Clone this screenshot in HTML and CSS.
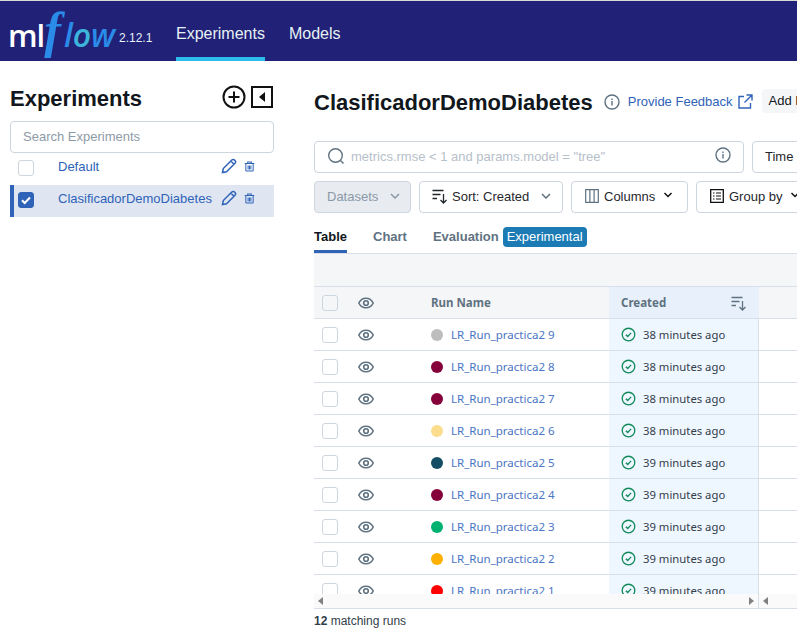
FILE: index.html
```html
<!DOCTYPE html>
<html lang="en">
<head>
    <meta charset="UTF-8">
    <meta name="viewport" content="width=device-width, initial-scale=1.0">
    <title>MLflow Experiments</title>
    <link rel="stylesheet" href="styles.css">
</head>
<body>
    <svg class="icon-defs" width="0" height="0">
        <symbol id="i-eye" viewBox="0 0 16 16"><path d="M.8 8C2.400 4.800 5 3.200 8 3.200s5.600 1.600 7.200 4.800C13.600 11.200 11 12.800 8 12.800S2.400 11.200.8 8z" fill="none" stroke="currentColor" stroke-width="1.600"/><circle cx="8" cy="8" r="2.300" fill="none" stroke="currentColor" stroke-width="1.600"/></symbol>
        <symbol id="i-ok" viewBox="0 0 16 16"><circle cx="8" cy="8" r="6.700" fill="none" stroke="currentColor" stroke-width="1.400"/><path d="M5.200 8.200l2 2 3.600-3.900" fill="none" stroke="currentColor" stroke-width="1.400"/></symbol>
        <symbol id="i-pencil" viewBox="0 0 16 16"><path d="M1.500 14.500l.8-4L10.800 2c.8-.8 2-.8 2.700 0l.5.500c.7.700.7 1.900 0 2.700l-8.500 8.500zM9.800 3l3.200 3.200" fill="none" stroke="currentColor" stroke-width="1.500"/></symbol>
        <symbol id="i-trash" viewBox="0 0 12 12"><path d="M.8 2.700h10.400M4 2.500V1h4v1.500M2 3v7.300c0 .4.300.7.700.7h6.600c.4 0 .7-.3.700-.7V3M4.500 4.800v4.400M6 4.800v4.400M7.500 4.800v4.400" fill="none" stroke="currentColor" stroke-width="1.100"/></symbol>
        <symbol id="i-info" viewBox="0 0 16 16"><circle cx="8" cy="8" r="7" fill="none" stroke="currentColor" stroke-width="1.400"/><path d="M7.300 7h1.400v4.500H7.300zM7.300 4.400h1.400v1.500H7.300z" fill="currentColor"/></symbol>
        <symbol id="i-sort" viewBox="0 0 16 16"><path d="M.5 2.500h11M.5 6.500h8M.5 10.500h4.500M11.500 6v9M8.500 12l3 3 3-3" fill="none" stroke="currentColor" stroke-width="1.300"/></symbol>
    </svg>

    <header class="topbar">
        <div class="logo"><span class="logo-ml">ml</span><span class="logo-f">f</span><span class="logo-low">l<span class="logo-o">o</span>w</span></div>
        <span class="version">2.12.1</span>
        <nav class="topnav">
            <a class="topnav-item active">Experiments</a>
            <a class="topnav-item">Models</a>
        </nav>
    </header>

    <div class="page">
        <aside class="sidebar">
            <div class="sidebar-head">
                <h2>Experiments</h2>
                <svg class="add-icon" width="24" height="24" viewBox="0 0 24 24"><circle cx="12" cy="12" r="10.500" fill="none" stroke="#111" stroke-width="2"/><path d="M12 6.500v11M6.500 12h11" stroke="#111" stroke-width="2"/></svg>
                <svg class="collapse-icon" width="22" height="22" viewBox="0 0 22 22"><rect x="1" y="1" width="20" height="20" fill="none" stroke="#111" stroke-width="2"/><path d="M14 6v10l-6-5z" fill="#111"/></svg>
            </div>
            <div class="sidebar-search">Search Experiments</div>
            <div class="exp-row">
                <span class="check"></span>
                <span class="exp-name">Default</span>
                <svg class="pencil" width="16" height="16"><use href="#i-pencil"/></svg>
                <svg class="trash" width="11" height="11"><use href="#i-trash"/></svg>
            </div>
            <div class="exp-row selected">
                <span class="check checked"><svg width="12" height="12" viewBox="0 0 12 12"><path d="M2 6.300l2.700 2.700L10 3.500" fill="none" stroke="#fff" stroke-width="2"/></svg></span>
                <span class="exp-name">ClasificadorDemoDiabetes</span>
                <svg class="pencil" width="16" height="16"><use href="#i-pencil"/></svg>
                <svg class="trash" width="11" height="11"><use href="#i-trash"/></svg>
            </div>
        </aside>

        <main class="main">
            <div class="title-row">
                <h1>ClasificadorDemoDiabetes</h1>
                <svg class="title-info" width="16" height="16"><use href="#i-info"/></svg>
                <a class="feedback">Provide Feedback</a>
                <svg class="external" width="15" height="15" viewBox="0 0 15 15"><path d="M6 2.500H1v11.500h11.500V9M8.500 1H14v5.500M14 1L6.500 8.500" fill="none" stroke="#2f63b8" stroke-width="1.400"/></svg>
                <span class="add-btn">Add Description</span>
            </div>

            <div class="filter-row">
                <div class="run-search">
                    <svg width="18" height="18" viewBox="0 0 18 18"><circle cx="8.500" cy="8.500" r="6.800" fill="none" stroke="#5f7281" stroke-width="1.400"/><path d="M13.500 13.500l3 3" stroke="#5f7281" stroke-width="1.400"/></svg>
                    <span class="run-search-text">metrics.rmse &lt; 1 and params.model = "tree"</span>
                    <svg class="run-search-info" width="16" height="16"><use href="#i-info"/></svg>
                </div>
                <span class="btn time-btn">Time created</span>
            </div>

            <div class="filter-row second">
                <span class="btn datasets">Datasets
                    <svg width="10" height="6" viewBox="0 0 10 6"><path d="M1 1l4 4 4-4" fill="none" stroke="#8a99a8" stroke-width="1.500"/></svg>
                </span>
                <span class="btn sort-btn">
                    <svg width="16" height="16"><use href="#i-sort"/></svg>
                    Sort: Created
                    <svg class="caret-gap" width="10" height="6" viewBox="0 0 10 6"><path d="M1 1l4 4 4-4" fill="none" stroke="#5f7281" stroke-width="1.500"/></svg>
                </span>
                <span class="btn columns-btn">
                    <svg width="14" height="14" viewBox="0 0 14 14"><path d="M.7.700h12.600v12.600H.7zM4.900.7v12.600M9.100.7v12.600" fill="none" stroke="#5f7281" stroke-width="1.200"/></svg>
                    Columns
                    <svg class="caret-small" width="10" height="6" viewBox="0 0 10 6"><path d="M1.500 1l3.500 3.500L8.500 1" fill="none" stroke="#111" stroke-width="1.500"/></svg>
                </span>
                <span class="btn group-btn">
                    <svg width="14" height="14" viewBox="0 0 14 14"><path d="M.7.700h12.600v12.600H.7z" fill="none" stroke="#111" stroke-width="1.300"/><path d="M3 4h1.500M6 4h5M3 7h1.500M6 7h5M3 10h1.500M6 10h5" stroke="#111" stroke-width="1.200"/></svg>
                    Group by
                    <svg class="caret-small" width="10" height="6" viewBox="0 0 10 6"><path d="M1.500 1l3.500 3.500L8.500 1" fill="none" stroke="#111" stroke-width="1.500"/></svg>
                </span>
            </div>

            <div class="tabs">
                <span class="tab active">Table</span>
                <span class="tab">Chart</span>
                <span class="tab">Evaluation</span>
                <span class="badge">Experimental</span>
            </div>

            <div class="table-top"></div>

            <div class="runs-table">
                <div class="run-row head">
                    <span class="cell-check"><span class="check head-check"></span></span>
                    <span class="cell-eye"><svg width="16" height="16"><use href="#i-eye"/></svg></span>
                    <span class="cell-name">Run Name</span>
                    <span class="cell-created">Created
                        <svg class="created-sort" width="16" height="16"><use href="#i-sort"/></svg>
                    </span>
                </div>
                <div class="run-rows">
                    <div class="run-row">
                        <span class="cell-check"><span class="check"></span></span>
                        <span class="cell-eye"><svg width="16" height="16"><use href="#i-eye"/></svg></span>
                        <span class="cell-name"><i class="dot dot-grey"></i><a>LR_Run_practica2 9</a></span>
                        <span class="cell-created"><svg class="ok" width="15" height="15"><use href="#i-ok"/></svg>38 minutes ago</span>
                    </div>
                    <div class="run-row">
                        <span class="cell-check"><span class="check"></span></span>
                        <span class="cell-eye"><svg width="16" height="16"><use href="#i-eye"/></svg></span>
                        <span class="cell-name"><i class="dot dot-wine"></i><a>LR_Run_practica2 8</a></span>
                        <span class="cell-created"><svg class="ok" width="15" height="15"><use href="#i-ok"/></svg>38 minutes ago</span>
                    </div>
                    <div class="run-row">
                        <span class="cell-check"><span class="check"></span></span>
                        <span class="cell-eye"><svg width="16" height="16"><use href="#i-eye"/></svg></span>
                        <span class="cell-name"><i class="dot dot-wine"></i><a>LR_Run_practica2 7</a></span>
                        <span class="cell-created"><svg class="ok" width="15" height="15"><use href="#i-ok"/></svg>38 minutes ago</span>
                    </div>
                    <div class="run-row">
                        <span class="cell-check"><span class="check"></span></span>
                        <span class="cell-eye"><svg width="16" height="16"><use href="#i-eye"/></svg></span>
                        <span class="cell-name"><i class="dot dot-sand"></i><a>LR_Run_practica2 6</a></span>
                        <span class="cell-created"><svg class="ok" width="15" height="15"><use href="#i-ok"/></svg>38 minutes ago</span>
                    </div>
                    <div class="run-row">
                        <span class="cell-check"><span class="check"></span></span>
                        <span class="cell-eye"><svg width="16" height="16"><use href="#i-eye"/></svg></span>
                        <span class="cell-name"><i class="dot dot-teal"></i><a>LR_Run_practica2 5</a></span>
                        <span class="cell-created"><svg class="ok" width="15" height="15"><use href="#i-ok"/></svg>39 minutes ago</span>
                    </div>
                    <div class="run-row">
                        <span class="cell-check"><span class="check"></span></span>
                        <span class="cell-eye"><svg width="16" height="16"><use href="#i-eye"/></svg></span>
                        <span class="cell-name"><i class="dot dot-wine"></i><a>LR_Run_practica2 4</a></span>
                        <span class="cell-created"><svg class="ok" width="15" height="15"><use href="#i-ok"/></svg>39 minutes ago</span>
                    </div>
                    <div class="run-row">
                        <span class="cell-check"><span class="check"></span></span>
                        <span class="cell-eye"><svg width="16" height="16"><use href="#i-eye"/></svg></span>
                        <span class="cell-name"><i class="dot dot-green"></i><a>LR_Run_practica2 3</a></span>
                        <span class="cell-created"><svg class="ok" width="15" height="15"><use href="#i-ok"/></svg>39 minutes ago</span>
                    </div>
                    <div class="run-row">
                        <span class="cell-check"><span class="check"></span></span>
                        <span class="cell-eye"><svg width="16" height="16"><use href="#i-eye"/></svg></span>
                        <span class="cell-name"><i class="dot dot-amber"></i><a>LR_Run_practica2 2</a></span>
                        <span class="cell-created"><svg class="ok" width="15" height="15"><use href="#i-ok"/></svg>39 minutes ago</span>
                    </div>
                    <div class="run-row">
                        <span class="cell-check"><span class="check"></span></span>
                        <span class="cell-eye"><svg width="16" height="16"><use href="#i-eye"/></svg></span>
                        <span class="cell-name"><i class="dot dot-red"></i><a>LR_Run_practica2 1</a></span>
                        <span class="cell-created"><svg class="ok" width="15" height="15"><use href="#i-ok"/></svg>39 minutes ago</span>
                    </div>
                </div>
                <div class="scrollbar">
                    <div class="scroll-left">
                        <i class="arrow-left"></i>
                        <i class="arrow-right"></i>
                    </div>
                    <div class="scroll-right">
                        <i class="arrow-left"></i>
                    </div>
                </div>
            </div>

            <p class="matching"><b>12</b> matching runs</p>
        </main>
    </div>
</body>
</html>
```

FILE: styles.css
```css
/* Global Styles */
html, body {
    height: 100%;
}

body {
    margin: 0;
    overflow: hidden;
    background: #fff;
    color: #1f272d;
    font-family: "Liberation Sans", Arial, sans-serif;
    font-size: 13px;
    border-top: 1px solid #d8d8d4;
}

.icon-defs {
    position: absolute;
}

svg {
    flex: none;
    display: block;
}

/* Top bar */
.topbar {
    height: 60px;
    background: #212177;
    display: flex;
    align-items: center;
    padding-left: 8px;
    color: #e6f1f5;
}

.logo {
    display: flex;
    align-items: baseline;
    font-family: "Open Sans", sans-serif;
    line-height: 60px;
    width: 111px;
    white-space: nowrap;
    margin-top: 2px;
}

.logo-ml {
    color: #fff;
    font-weight: 600;
    font-size: 31px;
    letter-spacing: -1px;
}

.logo-f {
    color: #2b8be8;
    font-family: "Liberation Serif", serif;
    font-style: italic;
    font-weight: 700;
    font-size: 50px;
}

.logo-low {
    color: #2b8be8;
    font-style: italic;
    font-weight: 600;
    font-size: 32px;
    margin-left: 3px;
}

.logo-o {
    color: #3cb4dc;
}

.version {
    font-size: 12px;
    margin-top: 14px;
    width: 57px;
}

.topnav {
    display: flex;
    gap: 24px;
    height: 100%;
}

.topnav-item {
    font-size: 16px;
    line-height: 66px;
    height: 56px;
}

.topnav-item.active {
    border-bottom: 4px solid #2dbdec;
}

/* Layout */
.page {
    display: flex;
    padding-left: 10px;
}

.sidebar {
    width: 264px;
    flex: none;
}

.sidebar-head {
    height: 60px;
    display: flex;
    align-items: center;
    padding-top: 16px;
    box-sizing: border-box;
}

.sidebar-head h2 {
    margin: 0;
    font-size: 22px;
    flex: 1;
    color: #11171c;
}

.add-icon {
    margin-right: 5px;
    margin-top: -5px;
}

.collapse-icon {
    margin-right: 1px;
    margin-top: -5px;
}

.sidebar-search {
    height: 32px;
    box-sizing: border-box;
    border: 1px solid #cdd5de;
    border-radius: 4px;
    padding: 0 12px;
    line-height: 30px;
    color: #8d9aa6;
    background: #fff;
}

.exp-row {
    height: 32px;
    box-sizing: border-box;
    display: flex;
    align-items: center;
    padding-left: 8px;
    padding-bottom: 2px;
    color: #2f63b8;
}

.exp-row.selected {
    background: #dfe6f2;
    border-left: 4px solid #2f63b8;
    padding-left: 4px;
}

.exp-name {
    width: 164px;
    margin-left: 24px;
    margin-bottom: 3px;
    white-space: nowrap;
}

.pencil {
    margin-bottom: 4px;
    margin-left: -1px;
}

.trash {
    margin-left: 7px;
    margin-bottom: 3px;
}

.check {
    display: block;
    box-sizing: border-box;
    width: 16px;
    height: 16px;
    flex: none;
    border: 1px solid #cdd5de;
    border-radius: 3px;
    background: #fff;
}

.check.checked {
    background: #2f63b8;
    border-color: #2f63b8;
    display: flex;
    align-items: center;
    justify-content: center;
}

/* Main column */
.main {
    margin-left: 40px;
    flex: 1;
    min-width: 0;
    overflow: hidden;
}

.title-row {
    height: 80px;
    box-sizing: border-box;
    padding-top: 4px;
    display: flex;
    align-items: center;
    white-space: nowrap;
}

.title-row h1 {
    margin: 0;
    font-size: 22px;
    color: #11171c;
    flex: none;
}

.title-info {
    margin-left: 11px;
    margin-bottom: 3px;
    color: #5f7281;
}

.feedback {
    margin-left: 8px;
    margin-bottom: 4px;
    color: #2f63b8;
}

.external {
    margin-left: 5px;
    margin-bottom: 4px;
}

.add-btn {
    margin-left: 9px;
    margin-bottom: 4px;
    background: #f5f6f8;
    border-radius: 4px;
    padding: 0 7px;
    line-height: 24px;
    color: #11171c;
}

.filter-row {
    display: flex;
    gap: 8px;
    height: 32px;
    white-space: nowrap;
}

.filter-row.second {
    margin-top: 8px;
}

.run-search {
    width: 430px;
    flex: none;
    box-sizing: border-box;
    border: 1px solid #cdd5de;
    border-radius: 4px;
    display: flex;
    align-items: center;
    padding-left: 12px;
    padding-bottom: 2px;
}

.run-search-text {
    margin-left: 6px;
    color: #b6c0c9;
    flex: 1;
}

.run-search-info {
    margin-right: 12px;
    margin-top: -2px;
    color: #5f7281;
}

.btn {
    box-sizing: border-box;
    border: 1px solid #cdd5de;
    border-radius: 4px;
    display: flex;
    align-items: center;
    flex: none;
    padding: 0 12px 2px;
    gap: 5px;
    color: #1f272d;
}

.datasets {
    width: 97px;
    background: #e8ebf0;
    color: #8a99a8;
    gap: 12px;
}

.sort-btn {
    width: 144px;
    gap: 4px;
}

.caret-gap {
    margin-left: 8px;
}

.columns-btn {
    width: 117px;
    padding-left: 13px;
}

.caret-small {
    margin-left: 3px;
    margin-top: -2px;
}

.group-btn {
    width: 125px;
    padding-left: 13px;
}

/* Tabs */
.tabs {
    margin-top: 10px;
    height: 31px;
    box-sizing: border-box;
    display: flex;
    align-items: flex-start;
    border-bottom: 1px solid #d8dfe8;
}

.tab {
    font-weight: bold;
    font-size: 13px;
    color: #5f7281;
    line-height: 20px;
    padding-top: 4px;
    height: 23px;
    margin-right: 26px;
}

.tab:nth-child(3) {
    margin-right: 4px;
}

.tab.active {
    color: #11171c;
    border-bottom: 3px solid #2f63b8;
}

.badge {
    background: #1c7bb5;
    color: #fff;
    border-radius: 4px;
    padding: 0 4px;
    line-height: 20px;
    margin-top: 4px;
}

.table-top {
    height: 32px;
    background: #f5f6f8;
    border-bottom: 1px solid #d8dfe8;
}

/* Runs table */
.runs-table {
    border-bottom: 1px solid #d8dfe8;
}

.run-rows {
    height: 275px;
    overflow: hidden;
}

.run-row {
    display: grid;
    grid-template-columns: 44px 73px 178px 150px 1fr;
    height: 32px;
    box-sizing: border-box;
    border-bottom: 1px solid #d8dfe8;
    align-items: center;
    font-family: "Noto Sans", sans-serif;
    font-size: 11.500px;
    white-space: nowrap;
}

.run-row.head {
    background: #f5f6f8;
    font-weight: 700;
    color: #5f7281;
}

.cell-check {
    padding-left: 8px;
}

.head-check {
    background: transparent;
}

.cell-eye {
    color: #5f7281;
}

.cell-name {
    display: flex;
    align-items: center;
}

.cell-name a {
    color: #4a74c4;
}

.dot {
    width: 12px;
    height: 12px;
    border-radius: 50%;
    margin-right: 8px;
    flex: none;
}

.dot-grey { background: #bdbdbd; }
.dot-wine { background: #85003a; }
.dot-sand { background: #fbdd8d; }
.dot-teal { background: #144e65; }
.dot-green { background: #00b16f; }
.dot-amber { background: #fdb000; }
.dot-red { background: #ff0000; }

.cell-created {
    height: 100%;
    background: #eef6ff;
    display: flex;
    align-items: center;
    padding-left: 12px;
    box-sizing: border-box;
    border-right: 1px solid #d8dfe8;
    color: #33404a;
    font-size: 11.300px;
}

.head .cell-created {
    background: #e7f0fb;
    border-right: 0;
    color: #5f7281;
    font-size: 11.500px;
}

.created-sort {
    margin-left: auto;
    margin-right: 12px;
}

.ok {
    color: #128a5a;
    margin-right: 7px;
}

.scrollbar {
    height: 14px;
    display: flex;
    background: #fafafa;
}

.scroll-left {
    width: 445px;
    flex: none;
    display: flex;
    justify-content: space-between;
    align-items: center;
    padding: 0 4px;
    box-sizing: border-box;
    border-right: 1px solid #d8dfe8;
}

.scroll-right {
    padding-left: 4px;
    display: flex;
    align-items: center;
}

.arrow-left, .arrow-right {
    display: block;
    width: 0;
    height: 0;
    border-top: 4px solid transparent;
    border-bottom: 4px solid transparent;
}

.arrow-left {
    border-right: 5px solid #808080;
}

.arrow-right {
    border-left: 5px solid #808080;
}

.matching {
    margin: 5px 0 0;
    font-size: 12px;
    line-height: 14px;
    color: #33404a;
}
```
